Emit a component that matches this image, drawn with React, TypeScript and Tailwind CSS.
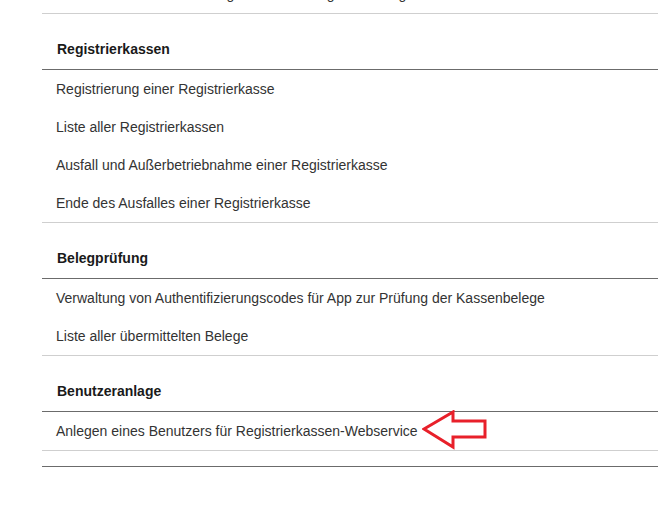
const sections = [
  {
    title: 'Registrierkassen',
    items: [
      'Registrierung einer Registrierkasse',
      'Liste aller Registrierkassen',
      'Ausfall und Außerbetriebnahme einer Registrierkasse',
      'Ende des Ausfalles einer Registrierkasse',
    ],
  },
  {
    title: 'Belegprüfung',
    items: [
      'Verwaltung von Authentifizierungscodes für App zur Prüfung der Kassenbelege',
      'Liste aller übermittelten Belege',
    ],
  },
  {
    title: 'Benutzeranlage',
    items: ['Anlegen eines Benutzers für Registrierkassen-Webservice'],
  },
];

function Arrow() {
  return (
    <svg width="70" height="42" viewBox="0 0 70 42" className="ml-[4px] shrink-0">
      <polygon
        points="2,19 31,2 31,11 63,11 63,27 31,27 31,37"
        fill="white"
        stroke="#e8202a"
        strokeWidth="3"
        strokeLinejoin="miter"
      />
    </svg>
  );
}

export default function App() {
  return (
    <div className="w-[658px] h-[523px] overflow-hidden bg-white font-['Liberation_Sans',Arial,sans-serif] text-[14px] text-[#333]">
      <div className="pl-[42px] w-[700px]">
        {/* last row of the section above, scrolled out of view */}
        <div className="-mt-[25px] border-b border-[#cfcfcf]">
          <div className="h-[38px] flex items-center pl-[14px]">
            Ende des Ausfalles einer Signatur- bzw. Siegelerstellungseinheit
          </div>
        </div>

        {sections.map((s, si) => (
          <div key={s.title} className="border-b border-[#cfcfcf]">
            <div className="pt-[25px] pl-[15px] h-[56px] border-b border-[#6b6b6b] font-bold text-[#1a1a1a] leading-[20px]">
              {s.title}
            </div>
            {s.items.map((it) => (
              <div key={it} className="h-[38px] flex items-center pl-[14px] leading-[20px]">
                <span>{it}</span>
                {si === 2 && <Arrow />}
              </div>
            ))}
          </div>
        ))}

        <div className="mt-[15px] border-b border-[#6b6b6b]" />
      </div>
    </div>
  );
}
